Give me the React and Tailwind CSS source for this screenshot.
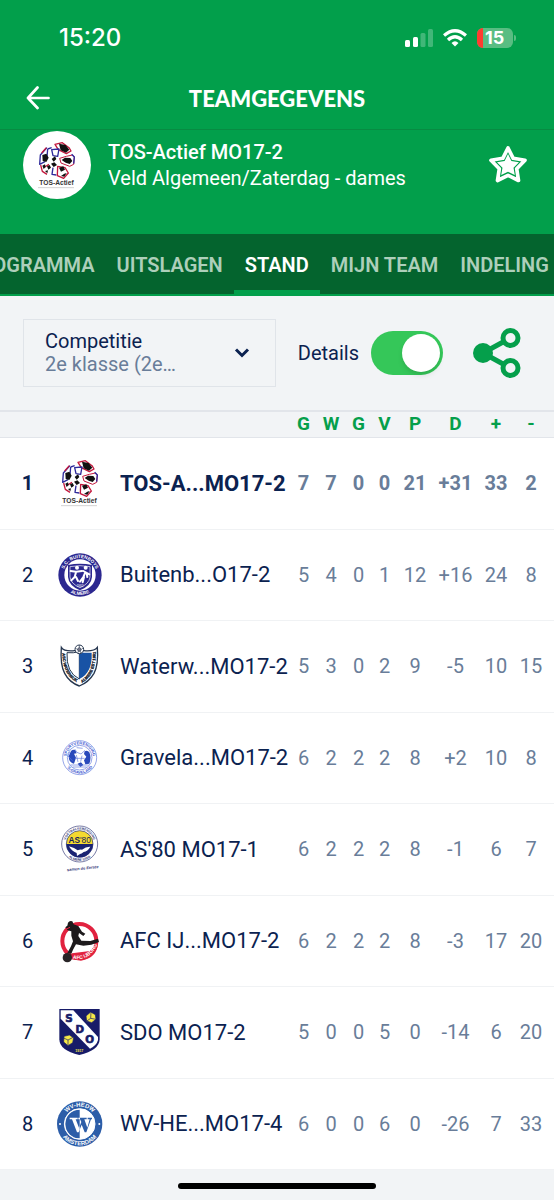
import React from "react";

function TosLogo() {
  return (
    <svg viewBox="45 39 150 150" className="size-[50px]" role="img" aria-label="TOS-Actief">
      <g strokeLinejoin="round">
        <path d="M114 52 L136 47 L156 62 L162 72 L148 80 L124 68 Z" fill="#fff" stroke="#c3173c" strokeWidth="4" />
        <path d="M126 50 L146 54 L157 68 L147 77 L131 70 Z" fill="#111" />
        <path d="M92 66 L104 62 M92 66 L90 90 M104 68 L126 66 L122 88 L108 86 Z" fill="none" stroke="#2e2a9b" strokeWidth="4" />
        <path d="M90 62 L70 84 L68 112 L84 104" fill="none" stroke="#2e2a9b" strokeWidth="4" />
        <path d="M88 62 L74 78" stroke="#c3173c" strokeWidth="4" />
        <path d="M76 84 L88 80 L95 92 L88 105 L77 102 Z" fill="#111" />
        <path d="M71 114 L76 133 L90 142 M83 120 L96 112" fill="none" stroke="#c3173c" strokeWidth="4" />
        <path d="M76 116 L84 112 L86 120 L80 126 Z M90 118 L98 114 L102 122 L94 128 Z M84 132 L93 130 L91 139 Z" fill="#111" />
        <path d="M104 96 L114 88 L118 96 L110 104 Z M102 110 L112 106 L120 114 L110 120 Z" fill="#111" />
        <path d="M128 94 L148 88 L166 84 L172 90 L170 112 L158 118 L132 108 Z" fill="#fff" stroke="#c3173c" strokeWidth="3" />
        <path d="M164 82 L172 90 L170 110" fill="none" stroke="#2e2a9b" strokeWidth="4" />
        <path d="M134 99 L144 92 L160 93 L166 102 L158 111 L146 107 Z" fill="#111" />
        <path d="M108 122 L105 142 L118 144" fill="none" stroke="#2e2a9b" strokeWidth="4" />
        <path d="M122 118 L144 122 L154 138 L140 154 L121 146 Z" fill="#fff" stroke="#c3173c" strokeWidth="4" />
        <path d="M126 122 L139 118 L144 128 L132 134 Z M142 140 L149 138 L142 149 L132 147 Z" fill="#111" />
      </g>
      <text x="118.500" y="175" textAnchor="middle" fill="#333" className="font-['Liberation_Sans',sans-serif] text-[20px] font-bold">TOS-Actief</text>
      <path d="M64 182H172" stroke="#999" strokeWidth="2" strokeDasharray="4 2" />
    </svg>
  );
}

function BuitenboysLogo() {
  return (
    <svg viewBox="45 315 150 150" className="size-[50px]" role="img" aria-label="Buitenboys">
      <defs>
        <path id="bb-top" d="M69 390 A51 51 0 0 1 171 390" />
        <path id="bb-bottom" d="M60 390 A60 60 0 0 0 180 390" />
      </defs>
      <circle cx="120" cy="390" r="65" fill="#2c2890" />
      <circle cx="120" cy="390" r="47" fill="#fff" />
      <g fill="#fff" textAnchor="middle" className="font-['Liberation_Sans',sans-serif] text-[14px] font-bold">
        <text><textPath href="#bb-top" startOffset="50%">S.C. BUITENBOYS</textPath></text>
        <text><textPath href="#bb-bottom" startOffset="50%">ALMERE</textPath></text>
      </g>
      <path d="M84 360 Q120 352 156 360 V396 Q154 422 120 436 Q86 422 84 396 Z" fill="#2c2890" />
      <path d="M90 365 Q120 359 150 365 V396 Q148 416 120 428 Q92 416 90 396 Z" fill="none" stroke="#fff" strokeWidth="2" />
      <g fill="none" stroke="#fff" strokeWidth="6" strokeLinecap="round" strokeLinejoin="round">
        <path d="M92 378 L108 380 L126 378 M108 382 L104 396 L94 406 M108 396 L114 408 M130 378 L148 388 M136 382 L130 396 L120 410 M132 396 L128 412 M140 384 L142 396" />
      </g>
      <circle cx="111" cy="368" r="6" fill="#fff" /><circle cx="137" cy="368" r="6" fill="#fff" />
      <text x="120" y="425" textAnchor="middle" fill="#fff" className="font-['Liberation_Sans',sans-serif] text-[9px]">1982</text>
    </svg>
  );
}

function WaterwijkLogo() {
  return (
    <svg viewBox="45 33 150 150" className="size-[50px]" role="img" aria-label="Waterwijk">
      <defs>
        <path id="ww-left" d="M67 62 Q67 106 81 129 Q94 150 116 160" />
        <path id="ww-right" d="M122 161 Q142 151 155 129 Q168 106 167 60" />
      </defs>
      <path d="M64 52 Q72 65 104 62 L132 62 Q162 65 172 52 Q176 104 162 130 Q146 157 118 168 Q88 157 74 130 Q60 104 64 52 Z" fill="#fff" stroke="#26364f" strokeWidth="4" />
      <path d="M81 68 Q100 70 118 65 V147 Q78 128 81 68 Z" fill="#fff" stroke="#26364f" strokeWidth="3" />
      <path d="M118 65 Q138 70 155 68 Q158 128 118 147 Z" fill="#1853a5" />
      <g fill="#1d2733" stroke="#1d2733" strokeWidth="1" textAnchor="middle" className="font-['Liberation_Sans',sans-serif] text-[12px] font-bold">
        <text><textPath href="#ww-left" startOffset="50%">ASC WATERWIJK</textPath></text>
        <text><textPath href="#ww-right" startOffset="50%">ALMERE EST 1981</textPath></text>
      </g>
      <circle cx="118" cy="58" r="13" fill="#fff" stroke="#26364f" strokeWidth="3" />
      <path d="M118 52 L124 57 L121 64 H115 L112 57 Z M107 54 L110 58 M129 54 L125 57 M118 45 V52 M113 69 L115 64 M123 69 L121 64" fill="#778" stroke="#26364f" strokeWidth="2" />
    </svg>
  );
}

function GravelandLogo() {
  return (
    <svg viewBox="45 308 150 150" className="size-[50px]" role="img" aria-label="'s-Graveland">
      <defs>
        <path id="gr-top" d="M79 382 A40 40 0 0 1 159 382" />
        <path id="gr-bottom" d="M71 382 A48 48 0 0 0 167 382" />
      </defs>
      <circle cx="119" cy="382" r="51" fill="#fff" stroke="#6078dc" strokeWidth="2" />
      <circle cx="119" cy="382" r="37" fill="#fff" stroke="#6078dc" strokeWidth="2" />
      <g fill="#3b55cf" textAnchor="middle" className="font-['Liberation_Sans',sans-serif] text-[12px] font-bold">
        <text><textPath href="#gr-top" startOffset="50%">SPORTVERENIGING</textPath></text>
        <text><textPath href="#gr-bottom" startOffset="50%">'S-GRAVELAND</textPath></text>
      </g>
      <path d="M93 362 Q100 356 106 360 L110 369 L102 370 L108 382 L102 400 Q86 398 86 378 Z M134 363 Q142 358 148 366 Q155 382 148 400 L136 402 L132 390 L139 379 L132 371 Z M113 400 L123 396 L130 404 L121 410 Z" fill="#2949bb" />
      <path d="M89 365 L84 377 L97 391 M104 356 L111 366 L123 371 L135 360 M109 374 L114 395 M126 376 L122 394 M105 384 H134 M110 352 L128 354 M92 404 H146 M98 410 H140" fill="none" stroke="#6078dc" strokeWidth="2" />
    </svg>
  );
}

function As80Logo() {
  return (
    <svg viewBox="45 42 150 150" className="size-[50px]" role="img" aria-label="AS'80">
      <defs>
        <path id="as-top" d="M76 102 A43 43 0 0 1 162 102" />
        <path id="as-bottom" d="M68 102 A51 51 0 0 0 170 102" />
      </defs>
      <circle cx="119" cy="102" r="54" fill="#fff" stroke="#333877" strokeWidth="2" />
      <g fill="#333877" textAnchor="middle" className="font-['Liberation_Sans',sans-serif] text-[10px] font-bold">
        <text><textPath href="#as-top" startOffset="50%">VOETBALVERENIGING</textPath></text>
        <text><textPath href="#as-bottom" startOffset="50%">ALMERE STAD</textPath></text>
      </g>
      <path d="M79 102 A40 40 0 0 1 159 102 Z" fill="#f5d92f" />
      <path d="M79 102 A40 40 0 0 0 159 102 Z" fill="#1a2372" />
      <circle cx="119" cy="102" r="40" fill="none" stroke="#1a2372" strokeWidth="2" />
      <text x="119" y="99" textAnchor="middle" fill="#171d58" className="font-['Liberation_Sans',sans-serif] text-[25px]"><tspan className="font-bold">AS</tspan>'80</text>
      <path d="M87 109 Q104 113 113 121 Q120 118 126 119 Q138 109 151 110 Q143 124 131 126 Q124 132 120 132 L111 138 L110 129 Q94 123 87 109 Z" fill="#fff" />
      <text x="81" y="184" transform="rotate(-6 81 184)" fill="#333877" className="font-['Liberation_Sans',sans-serif] text-[12px] font-bold italic">samen de Eerste</text>
    </svg>
  );
}

function IjburgLogo() {
  return (
    <svg viewBox="45 316 150 150" className="size-[50px]" role="img" aria-label="AFC IJburg">
      <defs><path id="ij-text" d="M96 444 Q148 454 173 400" /></defs>
      <circle cx="118" cy="391" r="51" fill="#fff" stroke="#e1223f" strokeWidth="12" />
      <path d="M96 428 L150 421 L174 398 Q171 442 123 450 L94 446 Z" fill="#e1223f" />
      <path d="M84 336 Q89 328 97 332 L101 341 L115 346 L126 363 L136 369 L130 376 L117 367 L115 376 L124 390 L151 391 L174 384 L177 394 L154 402 L130 405 L108 401 L99 417 L94 429 L82 427 L93 407 L99 392 L94 375 L94 362 L83 359 L76 350 L82 345 Z" fill="#1d1a1c" />
      <circle cx="82" cy="441" r="14" fill="#282426" />
      <path d="M77 356 L90 350" stroke="#e1223f" strokeWidth="3" />
      <text fill="#fff" textAnchor="middle" className="font-['Liberation_Sans',sans-serif] text-[15px] font-bold"><textPath href="#ij-text" startOffset="50%">AFC IJBURG</textPath></text>
    </svg>
  );
}

function SdoLogo() {
  return (
    <svg viewBox="45 51 150 150" className="size-[50px]" role="img" aria-label="SDO">
      <path d="M58 57 H179 V148 Q178 181 118 195 Q58 181 58 148 Z" fill="#171b68" />
      <path d="M62 61 H100 L174 141 V150 Q170 166 150 176 L62 86 Z" fill="#fff" />
      <g fill="#171b68" stroke="#171b68" strokeWidth="2" textAnchor="middle" className="font-['DejaVu_Sans',sans-serif] text-[31px] font-bold">
        <text x="87" y="96">S</text><text x="119" y="128">D</text><text x="149" y="158">O</text>
      </g>
      <g fill="#f6e847" stroke="#171b68" strokeWidth="2">
        <path d="M152 66 L166 74 L168 88 L155 98 L140 93 L138 78 Z M152 85 L153 66 M152 85 L139 94 M152 85 L168 88" />
        <path d="M72 139 L88 135 L101 143 L98 158 L84 167 L71 156 Z M84 150 L71 144 M84 150 L99 142 M84 150 V166" />
      </g>
      <text x="118" y="187" textAnchor="middle" fill="#f6e847" className="font-['Liberation_Sans',sans-serif] text-[11px] font-bold">1917</text>
    </svg>
  );
}

function HedwLogo() {
  return (
    <svg viewBox="45 325 150 150" className="size-[50px]" role="img" aria-label="WV-HEDW">
      <defs>
        <path id="hw-top" d="M67 400 A52 52 0 0 1 171 400" />
        <path id="hw-bottom" d="M55 400 A64 64 0 0 0 183 400" />
      </defs>
      <circle cx="119" cy="400" r="68" fill="#2c5da8" />
      <circle cx="119" cy="400" r="46" fill="#fff" />
      <path d="M119 357 A43 43 0 0 0 119 443 Z" fill="#2c5da8" />
      <circle cx="119" cy="400" r="46" fill="none" stroke="#fff" strokeWidth="3" />
      <g fill="#fff" textAnchor="middle" className="font-['Liberation_Sans',sans-serif] text-[18px] font-bold">
        <text><textPath href="#hw-top" startOffset="50%">WV-HEDW</textPath></text>
        <text><textPath href="#hw-bottom" startOffset="50%">AMSTERDAM</textPath></text>
      </g>
      <circle cx="60" cy="400" r="3" fill="#fff" /><circle cx="178" cy="400" r="3" fill="#fff" />
      <path d="M89 381 H113 V386 H107 L117 411 L124 394 L120 386 H115 V381 H140 V386 H133 L142 411 L149 386 H143 V381 H156 V386 H153 L139 425 H134 L125 402 L116 425 H111 L96 386 H89 Z" fill="#fff" />
      <path d="M119 407 L124 394 L120 386 V381 H140 V386 H133 L142 411 L149 386 H143 V381 H156 V386 H153 L139 425 H134 L125 402 L119 417 Z" fill="#2c5da8" />
    </svg>
  );
}

const teams = [
  { Logo: TosLogo, name: "TOS-A...MO17-2", stats: ["7", "7", "0", "0", "21", "+31", "33", "2"], own: true },
  { Logo: BuitenboysLogo, name: "Buitenb...O17-2", stats: ["5", "4", "0", "1", "12", "+16", "24", "8"] },
  { Logo: WaterwijkLogo, name: "Waterw...MO17-2", stats: ["5", "3", "0", "2", "9", "-5", "10", "15"] },
  { Logo: GravelandLogo, name: "Gravela...MO17-2", stats: ["6", "2", "2", "2", "8", "+2", "10", "8"] },
  { Logo: As80Logo, name: "AS'80 MO17-1", stats: ["6", "2", "2", "2", "8", "-1", "6", "7"] },
  { Logo: IjburgLogo, name: "AFC IJ...MO17-2", stats: ["6", "2", "2", "2", "8", "-3", "17", "20"] },
  { Logo: SdoLogo, name: "SDO MO17-2", stats: ["5", "0", "0", "5", "0", "-14", "6", "20"] },
  { Logo: HedwLogo, name: "WV-HE...MO17-4", stats: ["6", "0", "0", "6", "0", "-26", "7", "33"] },
];

const columns = ["G", "W", "G", "V", "P", "D", "+", "-"];
const tabs = ["PROGRAMMA", "UITSLAGEN", "STAND", "MIJN TEAM", "INDELING"];

function StatusBar() {
  return (
    <div className="flex h-[70px] items-center justify-between pt-[6px] pr-[38px] pl-[59px]">
      <span className="font-[Inter,sans-serif] text-[24px] font-medium">15:20</span>
      <div className="flex items-center gap-[10px]">
        <svg viewBox="0 0 28 18" className="h-[18px] w-7" fill="#fff" aria-hidden="true">
          <rect x="0" y="11" width="5" height="7" rx="1.500" />
          <rect x="8" y="8" width="5" height="10" rx="1.500" />
          <rect x="15.500" y="4" width="5" height="14" rx="1.500" opacity=".25" />
          <rect x="23" y="0" width="5" height="18" rx="1.500" opacity=".25" />
        </svg>
        <svg viewBox="0 0 24 18" className="h-[18px] w-6" fill="none" stroke="#fff" strokeWidth="3.300" aria-hidden="true">
          <path d="M1 6.500 Q12 -3 23 6.500" />
          <path d="M5 11 Q12 4.500 19 11" />
          <path d="M8.500 14 Q12 10.500 15.500 14 L12 17.500 Z" fill="#fff" stroke="none" />
        </svg>
        <div className="flex items-center gap-px">
          <div className="flex h-5 w-9 items-center overflow-hidden rounded-md bg-[#59bd82]">
            <span className="h-5 w-[6px] bg-[#ff3b30]" />
            <span className="pl-[2px] font-[Inter,sans-serif] text-[18px] leading-5 font-bold">15</span>
          </div>
          <span className="h-[6px] w-[2px] rounded-r-full bg-[#59bd82]" />
        </div>
      </div>
    </div>
  );
}

export default function App() {
  return (
    <div className="min-h-screen overflow-hidden bg-[#f2f4f6] font-[Roboto,sans-serif] text-[#0b2250]">
      <header className="bg-[#029f4b] text-white">
        <StatusBar />
        <div className="grid h-[60px] grid-cols-[1fr_auto_1fr] items-center border-b border-[#078b42] px-[26px] pb-[3px]">
          <button type="button" aria-label="Terug" className="flex w-6">
            <svg viewBox="0 0 24 24" className="size-6" fill="none" stroke="#fff" strokeWidth="2.700" strokeLinecap="round" strokeLinejoin="round">
              <path d="M11.500 1.500 L2 12 L11.500 22 M2 12 H22.500" />
            </svg>
          </button>
          <h1 className="font-[Lato,sans-serif] text-[22px] font-black">TEAMGEGEVENS</h1>
        </div>
        <div className="flex h-[104px] items-start px-[23px] pt-px">
          <div className="flex size-[68px] items-center justify-center rounded-full bg-white"><TosLogo /></div>
          <div className="min-w-0 flex-1 pt-2 pl-[17px] text-[20px] leading-[26px]">
            <p className="font-medium">TOS-Actief MO17-2</p>
            <p>Veld Algemeen/Zaterdag - dames</p>
          </div>
          <button type="button" aria-label="Favoriet" className="mt-[14px] mr-[3px]">
            <svg viewBox="0 0 40 40" className="size-10" strokeLinejoin="round">
              <path d="M20 3 L25.200 13.300 L37 15.300 L28.700 23.700 L30.500 35.500 L20 30.300 L9.500 35.500 L11.300 23.700 L3 15.300 L14.800 13.300 Z" fill="none" stroke="#fff" strokeWidth="3.700" />
              <path d="M20 9 L23.400 16 L31 17.200 L25.500 22.700 L26.800 30 L20 26.700 L13.200 30 L14.500 22.700 L9 17.200 L16.600 16 Z" fill="#fff" />
            </svg>
          </button>
        </div>
      </header>

      <nav className="overflow-hidden border-b-2 border-[#029f4b] bg-[#04642e]" aria-label="Teamonderdelen">
        <ul className="-ml-[44px] flex h-[60px]">
          {tabs.map((tab) => (
            <li key={tab} className="flex shrink-0">
              <a
                href={"#" + tab.toLowerCase().replace(" ", "-")}
                aria-current={tab === "STAND" ? "page" : undefined}
                className={
                  tab === "STAND"
                    ? "flex items-center border-b-4 border-[#029f4b] px-[11px] pt-[6px] text-[20px] font-semibold text-white"
                    : "flex items-center border-b-4 border-transparent px-[11px] pt-[6px] text-[20px] font-semibold text-[#adcfba]"
                }
              >
                {tab}
              </a>
            </li>
          ))}
        </ul>
      </nav>

      <main>
        <div className="flex h-[114px] items-center pr-[33px] pl-[23px]">
          <div className="flex h-[68px] min-w-0 flex-1 items-center border border-[#e0e4e9] pr-[25px] pl-[21px]">
            <div className="min-w-0 flex-1">
              <label htmlFor="competition" className="block text-[20px] leading-[23px]">Competitie</label>
              <select id="competition" className="block h-[23px] w-full appearance-none bg-transparent p-0 text-[20px] leading-[23px] text-[#697d99]">
                <option>2e klasse (2e…</option>
              </select>
            </div>
            <svg viewBox="0 0 16 10" className="h-[10px] w-4" fill="none" stroke="#0b2250" strokeWidth="3" aria-hidden="true"><path d="M2 1.500 L8 7.500 L14 1.500" /></svg>
          </div>
          <label htmlFor="details" className="ml-[22px] text-[20px]">Details</label>
          <input
            id="details"
            type="checkbox"
            role="switch"
            defaultChecked
            className="ml-3 flex h-11 w-[72px] shrink-0 appearance-none items-center rounded-full bg-[#c9ced6] p-[3px] before:size-[38px] before:rounded-full before:bg-white before:shadow-md checked:justify-end checked:bg-[#35c759]"
          />
          <button type="button" aria-label="Delen" className="ml-[30px] shrink-0">
            <svg viewBox="0 0 48 52" className="h-[52px] w-12" fill="none" stroke="#059f4b" strokeWidth="5">
              <path d="M10 26 L31 14.500 M10 26 L31 37.500" />
              <circle cx="10" cy="26" r="10" fill="#059f4b" stroke="none" />
              <circle cx="37.500" cy="11" r="7.500" />
              <circle cx="37.500" cy="41" r="7.500" />
            </svg>
          </button>
        </div>

        <table className="w-full table-fixed border-collapse">
          <colgroup>
            <col className="w-[55px]" />
            <col className="w-[50px]" />
            <col />
            <col className="w-[27px]" />
            <col className="w-[28px]" />
            <col className="w-[27px]" />
            <col className="w-[25px]" />
            <col className="w-[36px]" />
            <col className="w-[45px]" />
            <col className="w-[36px]" />
            <col className="w-[40px]" />
          </colgroup>
          <thead>
            <tr className="h-[26px] border-t-2 border-b border-[#e2e5ea] text-[19px] leading-6 text-[#059f4b]">
              <td colSpan={3} />
              {columns.map((column, i) => (
                <th key={i} scope="col" className="p-0 font-bold last:pr-[6px]">{column}</th>
              ))}
            </tr>
          </thead>
          <tbody className="bg-white">
            {teams.map(({ Logo, name, stats, own }, i) => (
              <tr
                key={name}
                className={
                  own
                    ? "h-[92px] border-b border-[#f0f2f4] font-bold"
                    : "border-b border-[#f0f2f4] odd:h-[92px] even:h-[91px]"
                }
              >
                <td className="p-0 text-center text-[20px]">{i + 1}</td>
                <td className="p-0"><Logo /></td>
                <th scope="row" className={own ? "p-0 pl-[15px] text-left text-[22px] font-bold whitespace-nowrap" : "p-0 pl-[15px] text-left text-[22px] font-normal whitespace-nowrap"}>{name}</th>
                {stats.map((value, j) => (
                  <td key={j} className="p-0 text-center text-[20px] text-[#697d99] last:pr-[6px]">{value}</td>
                ))}
              </tr>
            ))}
          </tbody>
        </table>
      </main>
      <div className="flex justify-center pt-[13px] pb-3">
        <span className="h-[6px] w-[198px] rounded-full bg-black" />
      </div>
    </div>
  );
}
